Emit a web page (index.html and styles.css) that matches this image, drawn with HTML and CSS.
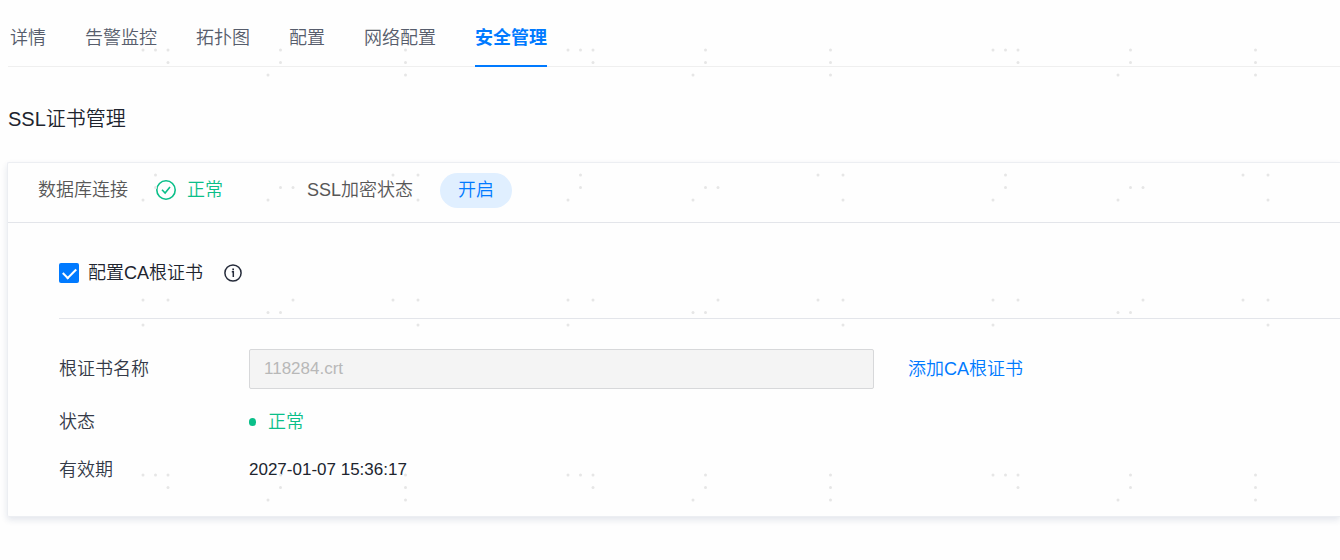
FILE: index.html
```html
<!DOCTYPE html>
<html lang="zh-CN">
<head>
<meta charset="utf-8">
<meta name="viewport" content="width=device-width, initial-scale=1">
<title>安全管理</title>
<link rel="stylesheet" href="styles.css">
</head>
<body>
<main class="page">
  <nav class="tabs">
    <a class="tab" href="#detail">详情</a>
    <a class="tab" href="#alarm">告警监控</a>
    <a class="tab" href="#topology">拓扑图</a>
    <a class="tab" href="#config">配置</a>
    <a class="tab" href="#network">网络配置</a>
    <a class="tab tab-active" href="#security" aria-current="page">安全管理</a>
  </nav>

  <h1 class="title">SSL证书管理</h1>

  <section class="card">
    <header class="summary">
      <span class="summary-label">数据库连接</span>
      <span class="summary-state">
        <svg class="ok-icon" viewBox="0 0 20 20" aria-hidden="true"><circle cx="10" cy="10" r="9.2"/><path d="M6 9.8l3.1 3.2 4.9-6"/></svg>
        正常
      </span>
      <span class="summary-label">SSL加密状态</span>
      <button class="pill" type="button">开启</button>
    </header>

    <div class="body">
      <div class="option">
        <label class="check-label" for="ca"><input class="check" id="ca" type="checkbox" checked>配置CA根证书</label>
        <svg class="info-icon" viewBox="0 0 18 18" role="img" aria-label="说明"><circle cx="9" cy="9" r="8.1"/><path d="M7.8 7.8H9.3V13"/><path class="info-point" d="M8.3 4.6h1.7v1.6H8.3z"/></svg>
      </div>

      <div class="fields">
        <div class="row row-input">
          <label class="name" for="cert">根证书名称</label>
          <input class="text-input" id="cert" type="text" value="118284.crt" disabled>
          <a class="add-link" href="#add">添加CA根证书</a>
        </div>
        <div class="row row-status">
          <span class="name">状态</span>
          <span class="state">正常</span>
        </div>
        <div class="row">
          <span class="name">有效期</span>
          <time class="date" datetime="2027-01-07T15:36:17">2027-01-07 15:36:17</time>
        </div>
      </div>
    </div>
  </section>
</main>

<svg class="watermark" aria-hidden="true">
  <defs>
    <pattern id="dots" width="425" height="425" patternUnits="userSpaceOnUse">
      <g fill="#e6e6e6">
        <circle cx="143" cy="50" r="1.5"/><circle cx="155.5" cy="50" r="1.5"/><circle cx="168" cy="50" r="1.5"/><circle cx="280.5" cy="50" r="1.5"/><circle cx="405.5" cy="50" r="1.5"/>
        <circle cx="168" cy="62.5" r="1.5"/><circle cx="280.5" cy="62.5" r="1.5"/><circle cx="405.5" cy="62.5" r="1.5"/>
        <circle cx="268" cy="75" r="1.5"/><circle cx="405.5" cy="75" r="1.5"/>
        <circle cx="155.5" cy="175" r="1.5"/><circle cx="393" cy="175" r="1.5"/><circle cx="418" cy="175" r="1.5"/>
        <circle cx="155.5" cy="187.5" r="1.5"/><circle cx="280.5" cy="187.5" r="1.5"/><circle cx="293" cy="187.5" r="1.5"/>
        <circle cx="143" cy="200" r="1.5"/><circle cx="268" cy="200" r="1.5"/><circle cx="418" cy="200" r="1.5"/>
        <circle cx="143" cy="300" r="1.5"/><circle cx="168" cy="300" r="1.5"/><circle cx="293" cy="300" r="1.5"/><circle cx="393" cy="300" r="1.5"/><circle cx="418" cy="300" r="1.5"/>
        <circle cx="268" cy="312.5" r="1.5"/><circle cx="280.5" cy="312.5" r="1.5"/>
        <circle cx="143" cy="325" r="1.5"/><circle cx="418" cy="325" r="1.5"/>
      </g>
    </pattern>
  </defs>
  <rect width="100%" height="100%" fill="url(#dots)"/>
</svg>
</body>
</html>
```

FILE: styles.css
```css
* {
  box-sizing: border-box;
}

body {
  margin: 0;
  position: relative;
  min-height: 100vh;
  background: #fefefe;
  color: #20242e;
  font: 350 18px/24px "Liberation Sans", "Noto Sans CJK SC", sans-serif;
}

a {
  text-decoration: none;
}

.page {
  padding: 8px 0 40px 7px;
}

.tabs {
  display: flex;
  gap: 39px;
  margin-left: 1px;
  padding: 0 2px;
  border-bottom: 1px solid #efefef;
}

.tab {
  height: 58px;
  padding-top: 18px;
  color: #575d6c;
}

.tab-active {
  margin-bottom: -1px;
  height: 59px;
  border-bottom: 2px solid #007aff;
  color: #007aff;
  font-weight: 700;
}

.title {
  margin: 37px 0 28px 1px;
  font-size: 20px;
  font-weight: 350;
  line-height: 30px;
}

.card {
  border: 1px solid #eceef2;
  border-right: 0;
  border-radius: 2px 0 0 2px;
  box-shadow: 0 3px 6px rgba(37, 60, 110, 0.12);
}

.summary {
  display: flex;
  align-items: center;
  height: 60px;
  padding: 0 30px 5px;
  border-bottom: 1px solid #e3e5ea;
  color: #575757;
}

.summary-state {
  display: flex;
  align-items: center;
  gap: 11px;
  margin: 0 84px 0 28px;
  color: #0abf89;
}

.ok-icon {
  width: 20px;
  height: 20px;
  fill: none;
  stroke: #0abf89;
  stroke-width: 1.6;
}

.pill {
  margin-left: 27px;
  padding: 0 18px;
  height: 35px;
  border: 0;
  border-radius: 18px;
  background: #e0efff;
  color: #007aff;
  font: inherit;
}

.body {
  padding: 37px 0 30px 51px;
}

.option {
  display: flex;
  align-items: center;
  gap: 21px;
  padding-bottom: 32px;
  border-bottom: 1px solid #e3e5ea;
}

.check-label {
  display: flex;
  align-items: center;
  gap: 9px;
  height: 26px;
}

.check {
  display: grid;
  place-items: center;
  appearance: none;
  width: 20px;
  height: 20px;
  margin: 0;
  border-radius: 2px;
  background: #007aff;
}

.check:checked::after {
  content: "";
  width: 11px;
  height: 6px;
  margin-bottom: 3px;
  border: solid #fff;
  border-width: 0 0 2px 2px;
  transform: rotate(-45deg);
}

.info-icon {
  width: 18px;
  height: 18px;
  fill: none;
  stroke: #252b3a;
  stroke-width: 1.5;
}

.info-point {
  fill: #252b3a;
  stroke: none;
}

.fields {
  padding-top: 30px;
}

.row {
  display: flex;
  align-items: center;
  height: 32px;
}

.row-input {
  height: 40px;
}

.row-status {
  margin: 17px 0 16px;
}

.name {
  flex: none;
  width: 190px;
  color: #343a48;
}

.text-input {
  flex: 0 1 625px;
  min-width: 0;
  height: 40px;
  padding: 0 14px;
  border: 1px solid #d7d8da;
  border-radius: 2px;
  background: #f4f4f4;
  color: #b8b8b8;
  font: 350 17px/24px "Liberation Sans", "Noto Sans CJK SC", sans-serif;
}

.add-link {
  flex: none;
  margin-left: 34px;
  color: #007aff;
}

.state {
  display: flex;
  align-items: center;
  gap: 12px;
  color: #0abf89;
}

.state::before {
  content: "";
  width: 7px;
  height: 8px;
  border-radius: 4px;
  background: #0abf89;
}

.date {
  font-size: 17px;
}

.watermark {
  position: absolute;
  inset: 0;
  width: 100%;
  height: 100%;
  pointer-events: none;
}
```
